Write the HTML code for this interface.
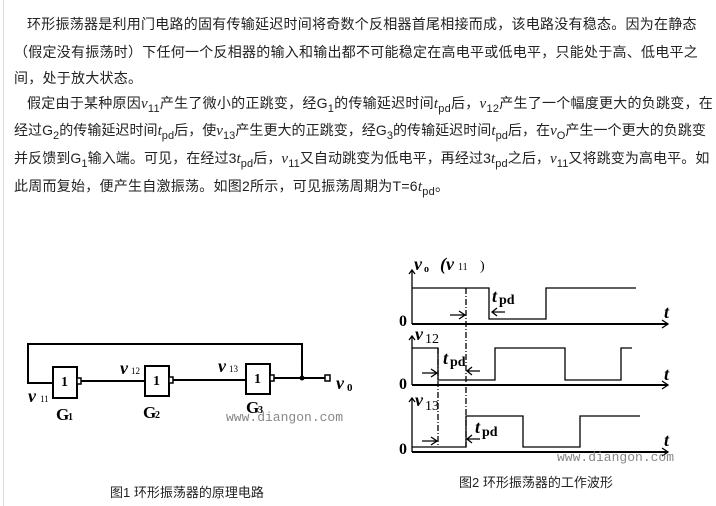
<!DOCTYPE html>
<html><head><meta charset="utf-8"><style>
body{margin:0;width:716px;height:506px;background:#fff;position:relative;overflow:hidden;font-family:"Liberation Sans","Noto Sans CJK SC",sans-serif;color:#222}
.l{position:absolute;left:14px;font-size:14px;white-space:nowrap;line-height:18px;letter-spacing:0.25px}
i{font-family:"Liberation Serif",serif;font-style:italic;font-size:15px}
sub{font-size:11px;vertical-align:-4px;line-height:0}
.bar{position:absolute;left:3px;top:0;width:1px;height:506px;background:#ddd}
svg{position:absolute;left:0;top:0}
</style></head><body>
<div class="bar"></div>
<div class="l" style="left:27px;top:15px">环形振荡器是利用门电路的固有传输延迟时间将奇数个反相器首尾相接而成，该电路没有稳态。因为在静态</div>
<div class="l" style="top:43px">（假定没有振荡时）下任何一个反相器的输入和输出都不可能稳定在高电平或低电平，只能处于高、低电平之</div>
<div class="l" style="top:69px">间，处于放大状态。</div>
<div class="l" style="left:27px;top:94px">假定由于某种原因<i>v</i><sub>11</sub>产生了微小的正跳变，经G<sub>1</sub>的传输延迟时间<i>t</i><sub>pd</sub>后，<i>v</i><sub>12</sub>产生了一个幅度更大的负跳变，在</div>
<div class="l" style="top:121px;letter-spacing:0.05px">经过G<sub>2</sub>的传输延迟时间<i>t</i><sub>pd</sub>后，使<i>v</i><sub>13</sub>产生更大的正跳变，经G<sub>3</sub>的传输延迟时间<i>t</i><sub>pd</sub>后，在<i>v</i><sub>O</sub>产生一个更大的负跳变</div>
<div class="l" style="top:149px;letter-spacing:0.1px">并反馈到G<sub>1</sub>输入端。可见，在经过3<i>t</i><sub>pd</sub>后，<i>v</i><sub>11</sub>又自动跳变为低电平，再经过3<i>t</i><sub>pd</sub>之后，<i>v</i><sub>11</sub>又将跳变为高电平。如</div>
<div class="l" style="top:177px">此周而复始，便产生自激振荡。如图2所示，可见振荡周期为T=6<i>t</i><sub>pd</sub>。</div>

<svg width="716" height="506" font-family="Liberation Serif,serif">
<g stroke="#000" stroke-width="2" fill="none">
<path d="M302 379V344H28V383H53"/>
<rect x="53" y="367" width="24" height="31" fill="#fff"/>
<rect x="145" y="366" width="24" height="30" fill="#fff"/>
<rect x="246" y="364" width="24" height="30" fill="#fff"/>
<path d="M81 381H145M173 380H246M274 378H325"/>
</g>
<g stroke="#000" stroke-width="1.5" fill="#fff">
<rect x="77" y="378" width="4" height="6"/><rect x="169" y="377" width="4" height="6"/><rect x="270" y="375" width="4" height="6"/>
<rect x="325" y="375" width="5" height="6"/></g>
<circle cx="302" cy="378" r="2.5"/>
<g font-weight="bold" font-size="14"><text x="61" y="386">1</text><text x="153" y="385">1</text><text x="254" y="383">1</text></g>
<g font-style="italic" font-weight="bold" font-size="18"><text x="28" y="402">v</text><text x="120" y="374">v</text><text x="218" y="372">v</text><text x="336" y="389">v</text></g>
<g font-size="9"><text x="40" y="402">11</text><text x="131" y="374">12</text><text x="229" y="372">13</text></g>
<text x="347" y="391" font-size="11" font-weight="bold">0</text>
<g font-size="17" font-weight="bold"><text x="56" y="420">G</text><text x="143" y="418">G</text><text x="246" y="413">G</text></g>
<g font-size="10" font-weight="bold"><text x="68" y="420">1</text><text x="155" y="418">2</text><text x="258" y="413">3</text></g>
<text x="226" y="421" font-size="13" fill="#888" font-family="Liberation Mono,monospace">www.diangon.com</text>

<g stroke="#000" fill="none" stroke-width="1.3">
<path d="M412 324V271M412 385V337M412 452V399"/>
<path d="M409 274l3-4 3 4M409 340l3-4 3 4M409 402l3-4 3 4"/>
<path d="M412 324H668M412 385H668M412 452H668" stroke-width="2"/>
<path d="M662 320l6 4-6 4M662 381l6 4-6 4M662 448l6 4-6 4"/>
<path d="M412 288H489V319H546V288H636"/>
<path d="M412 348H438V380H495V348H565V380H621V348H632"/>
<path d="M412 447H466V416H523V447H580V416H640"/>
<path d="M466 288V447M438 348V447" stroke-dasharray="6,2,1,2"/>
<path d="M450 315H465M459 311l6 4-6 4M492 312H505M497 308l-5 4 5 4"/>
<path d="M422 373H437M431 369l6 4-6 4M467 371H480M472 367l-5 4 5 4"/>
<path d="M422 441H437M431 437l6 4-6 4M467 439H480M472 435l-5 4 5 4"/>
</g>
<g font-size="16" font-weight="bold"><text x="399" y="326">0</text><text x="399" y="389">0</text><text x="399" y="454">0</text></g>
<g font-style="italic" font-size="18" font-weight="bold"><text x="414" y="270">v</text><text x="440" y="270">(v</text><text x="415" y="340">v</text><text x="415" y="406">v</text>
<text x="664" y="318">t</text><text x="664" y="380">t</text><text x="664" y="446">t</text>
<text x="492" y="302">t</text><text x="443" y="364">t</text><text x="475" y="433">t</text></g>
<text x="424" y="272" font-size="10" font-weight="bold">o</text>
<text x="458" y="270" font-size="10">11</text><text x="480" y="270" font-size="14">)</text>
<text x="425" y="343" font-size="14">12</text><text x="425" y="410" font-size="14">13</text>
<g font-size="14" font-weight="bold"><text x="499" y="304">pd</text><text x="450" y="366">pd</text><text x="482" y="436">pd</text></g>
<text x="557" y="461" font-size="13" fill="#888" font-family="Liberation Mono,monospace">www.diangon.com</text>
</svg>
<div class="l" style="left:110px;top:484px;font-size:13px;letter-spacing:0">图1 环形振荡器的原理电路</div>
<div class="l" style="left:459px;top:474px;font-size:13px;letter-spacing:0">图2 环形振荡器的工作波形</div>
</body></html>
